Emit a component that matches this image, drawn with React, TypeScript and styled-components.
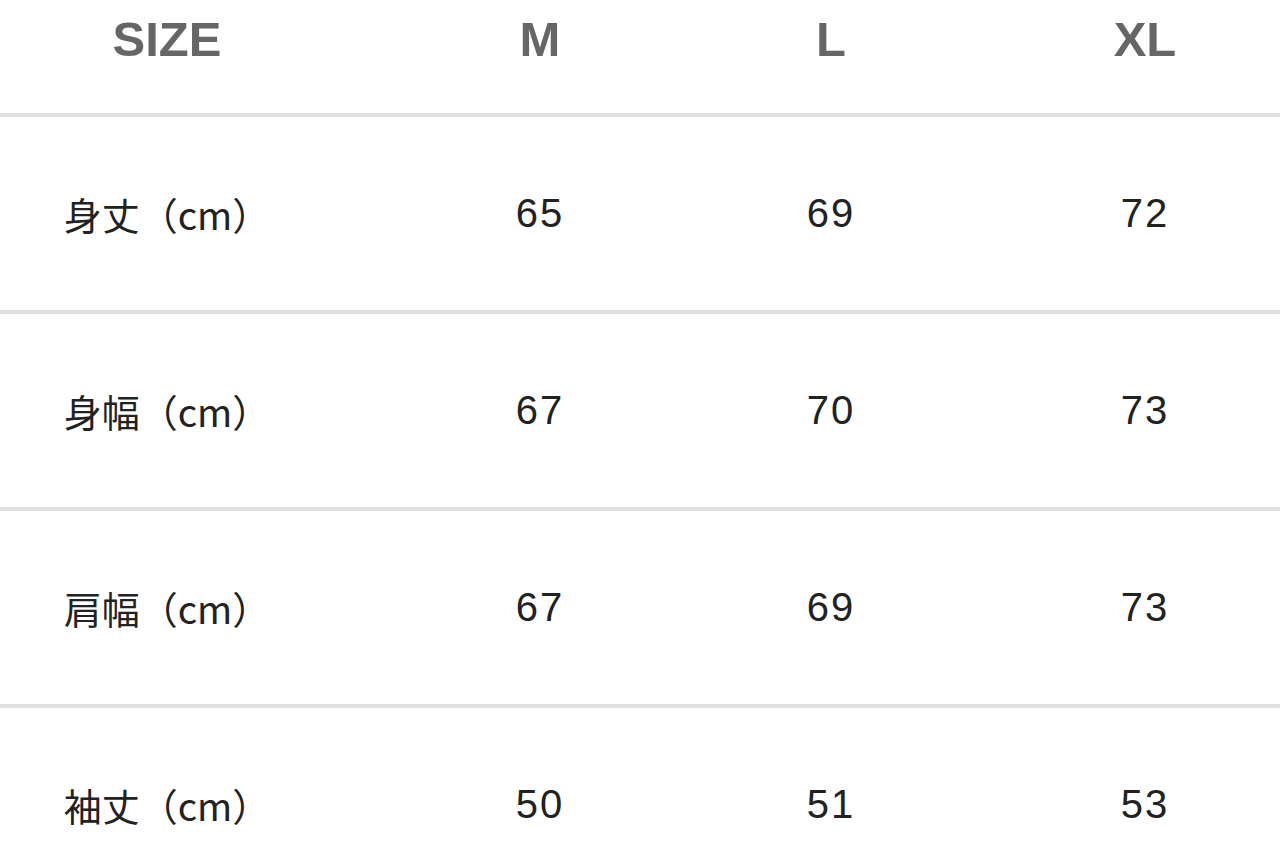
import React from "react";
import styled, { createGlobalStyle } from "styled-components";

const Global = createGlobalStyle`
  html, body { margin: 0; padding: 0; background: #fff; overflow: hidden; }
  body { font-family: "Noto Sans CJK JP", "Noto Sans", sans-serif; }
`;

const Table = styled.div`
  width: 1374px;
  display: grid;
  grid-template-columns: 334px 412px 170px 458px;
`;

const HeadCell = styled.div`
  height: 117px;
  box-sizing: border-box;
  padding-top: 14px;
  text-align: center;
  font-family: "Liberation Sans", Arial, sans-serif;
  font-weight: 700;
  font-size: 49px;
  line-height: 50px;
  color: #666;
  border-bottom: 4px solid #e0e0e0;
`;

const Cell = styled.div<{ $label?: boolean }>`
  height: 197px;
  box-sizing: border-box;
  display: flex;
  align-items: center;
  justify-content: center;
  font-family: ${(p) =>
    p.$label
      ? `"Noto Sans CJK JP", "Noto Sans", sans-serif`
      : `"Liberation Sans", Arial, sans-serif`};
  font-size: ${(p) => (p.$label ? "38px" : "40px")};
  letter-spacing: ${(p) => (p.$label ? "0" : "2px")};
  color: #222;
  border-bottom: 4px solid #e0e0e0;
`;

const heads = ["SIZE", "M", "L", "XL"];
const rows: [string, string, string, string][] = [
  ["身丈（cm）", "65", "69", "72"],
  ["身幅（cm）", "67", "70", "73"],
  ["肩幅（cm）", "67", "69", "73"],
  ["袖丈（cm）", "50", "51", "53"],
];

export default function App() {
  return (
    <>
      <Global />
      <Table>
        {heads.map((h) => (
          <HeadCell key={h}>{h}</HeadCell>
        ))}
        {rows.map((r) =>
          r.map((c, i) => (
            <Cell key={r[0] + i} $label={i === 0}>
              {c}
            </Cell>
          ))
        )}
      </Table>
    </>
  );
}
